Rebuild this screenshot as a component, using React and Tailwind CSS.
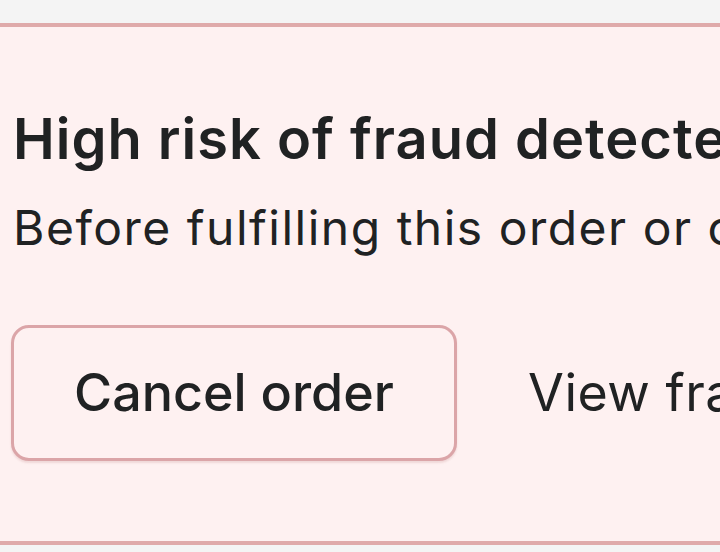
import React from "react";

export default function App() {
  return (
    <div
      className="w-[720px] h-[552px] overflow-hidden bg-[#f4f4f4]"
      style={{ fontFamily: "Inter, 'Noto Sans', sans-serif" }}
    >
      <div className="mt-[23px] h-[522px] border-y-[4px] border-[#dfaaaa] bg-[#fef1f1] whitespace-nowrap">
        <div className="pl-[13px] pt-[78px]">
          <h2 className="text-[56px] leading-[68px] font-semibold text-[#202223] tracking-[1px]">
            High risk of fraud detected
          </h2>
          <p className="mt-[26px] text-[48px] leading-[58px] text-[#202223] tracking-[1.5px]">
            Before fulfilling this order or capturing payment, please review the fraud analysis.
          </p>
        </div>
        <div className="mt-[68px] pl-[11px] flex items-center gap-[71px]">
          <button className="shrink-0 w-[446px] h-[136px] rounded-[18px] border-[3px] border-[#dba5a8] bg-[#fef1f1] shadow-[0_2px_2px_rgba(160,80,80,0.15)] text-[52px] font-medium text-[#202223]">
            Cancel order
          </button>
          <button className="shrink-0 text-[52px] text-[#202223] tracking-[0.5px]">View fraud analysis</button>
        </div>
      </div>
    </div>
  );
}
